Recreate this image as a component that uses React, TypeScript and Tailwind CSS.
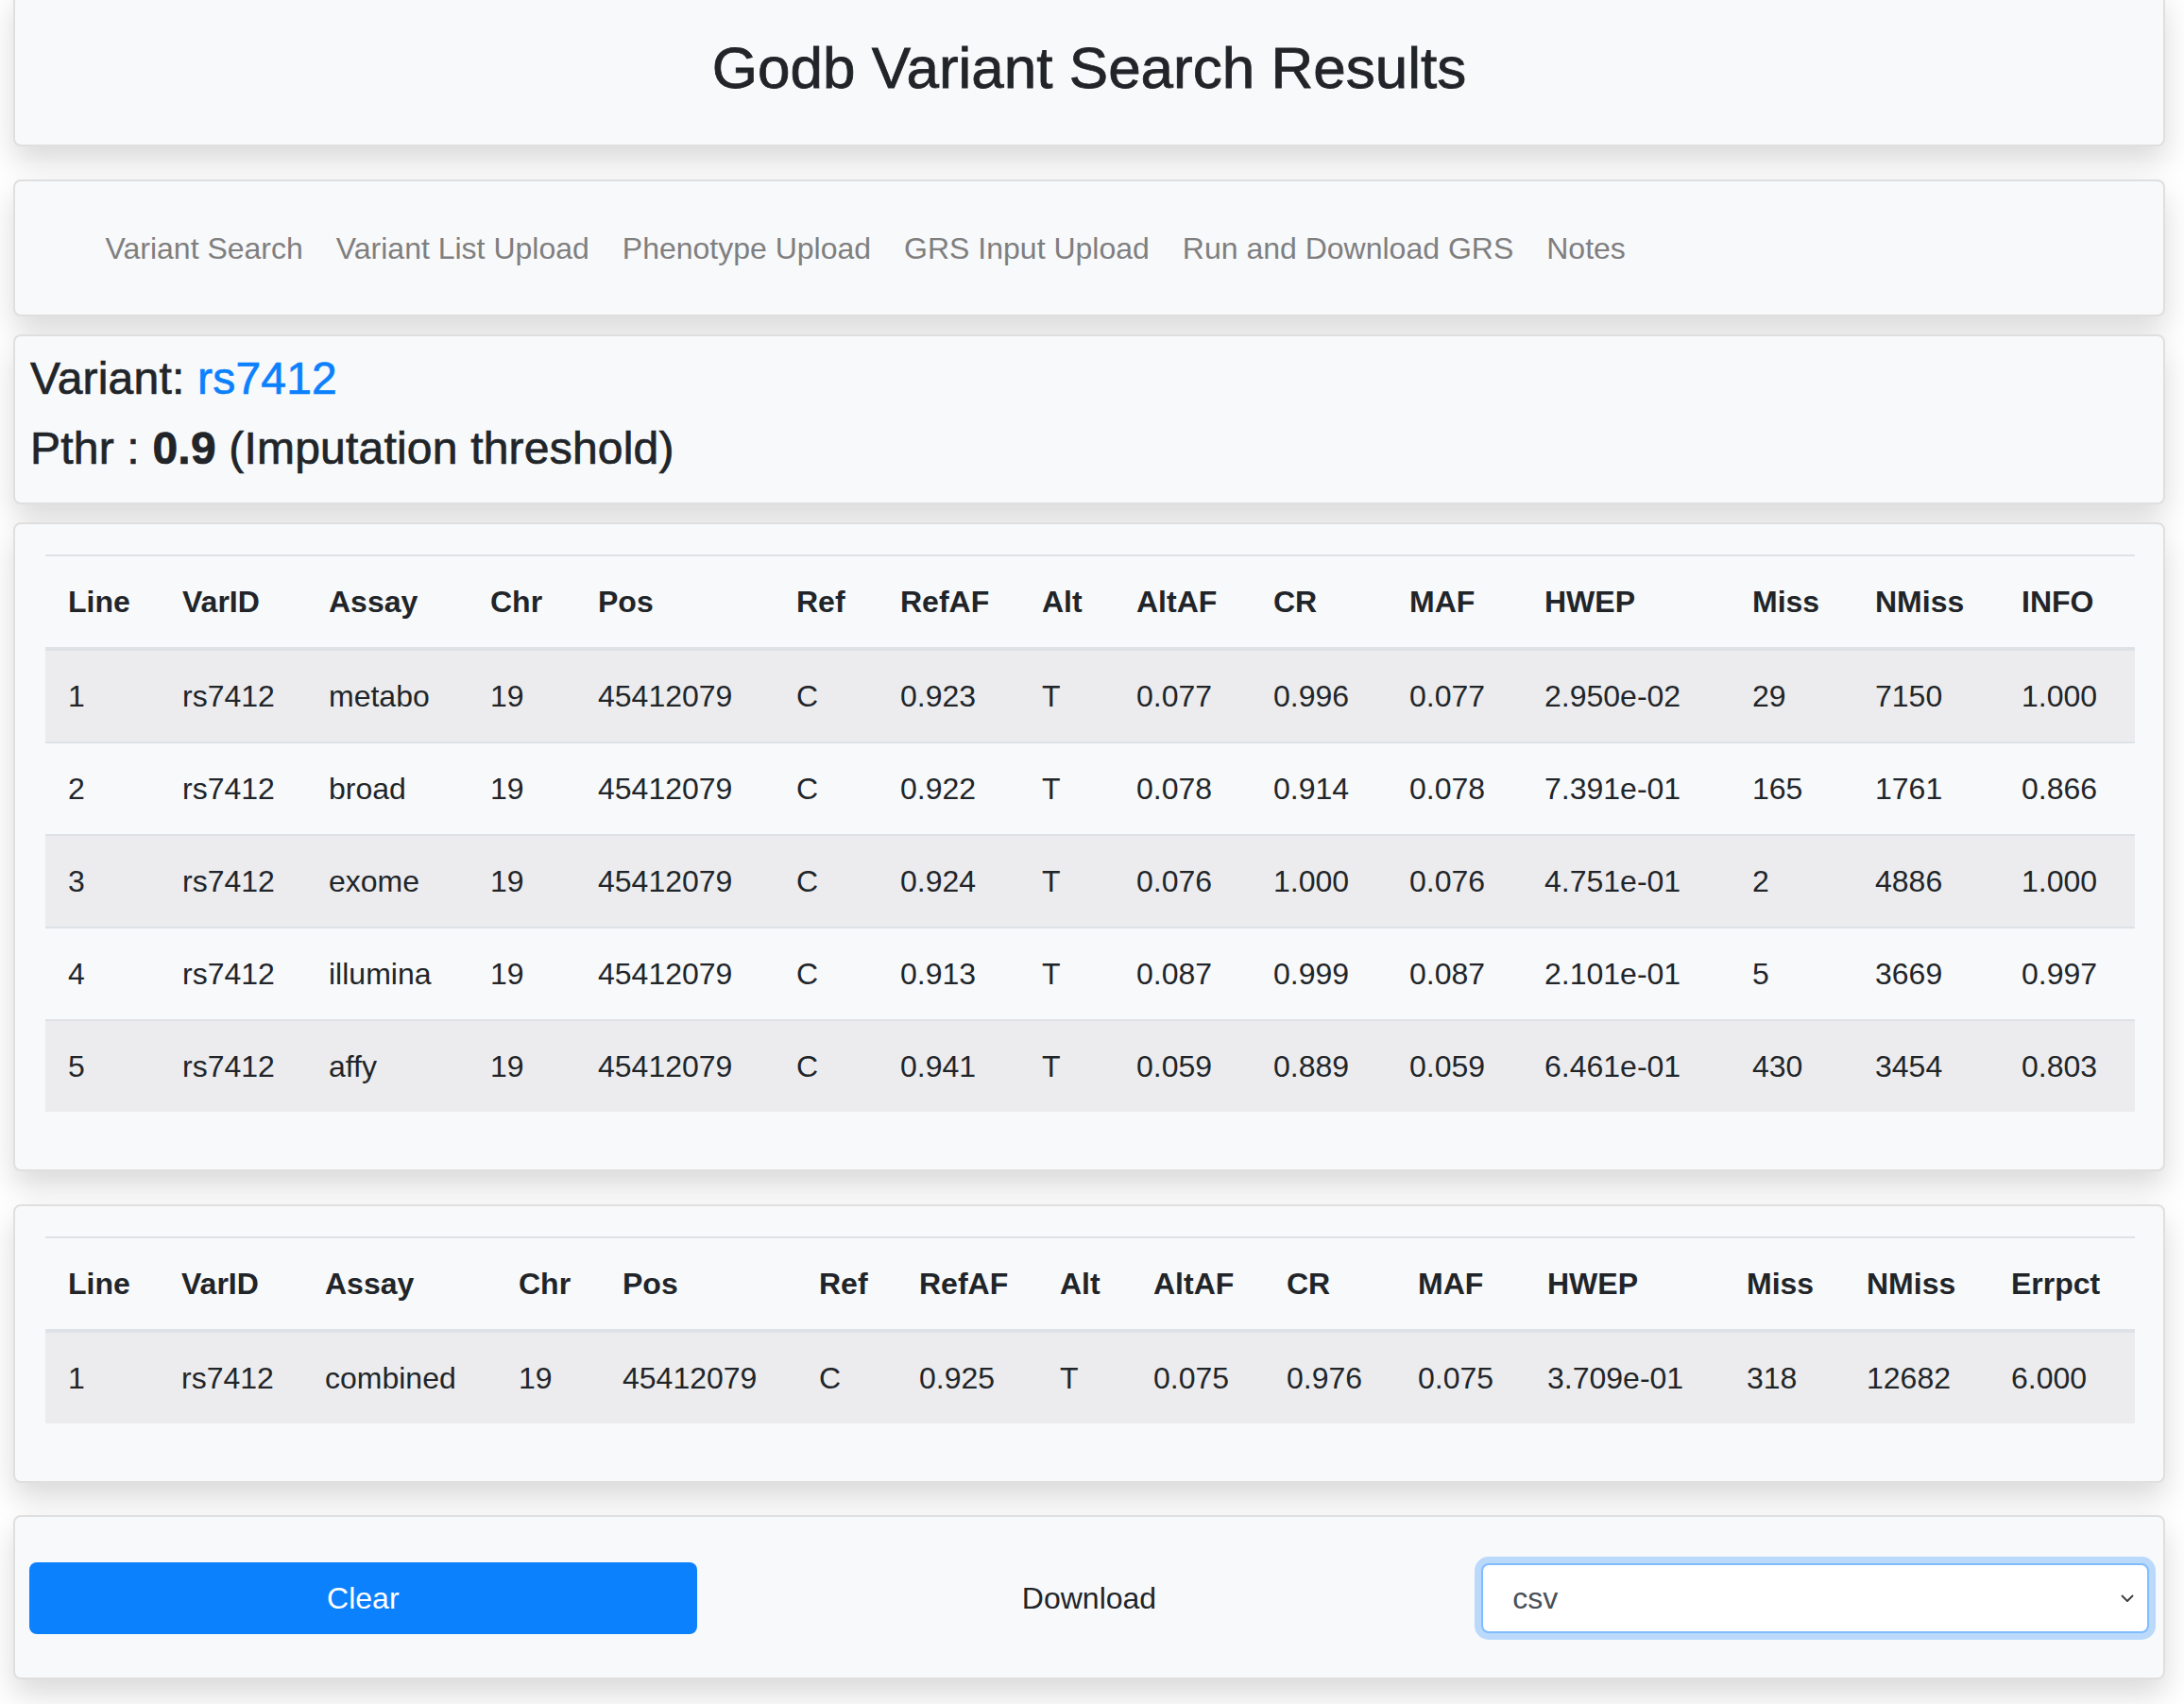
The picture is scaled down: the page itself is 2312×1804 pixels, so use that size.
import React from "react"

const headers1 = ["Line", "VarID", "Assay", "Chr", "Pos", "Ref", "RefAF", "Alt", "AltAF", "CR", "MAF", "HWEP", "Miss", "NMiss", "INFO"]
const headers2 = ["Line", "VarID", "Assay", "Chr", "Pos", "Ref", "RefAF", "Alt", "AltAF", "CR", "MAF", "HWEP", "Miss", "NMiss", "Errpct"]

const cols1 = ["w-[121px]", "w-[155px]", "w-[171px]", "w-[114px]", "w-[210px]", "w-[110px]", "w-[150px]", "w-[100px]", "w-[145px]", "w-[144px]", "w-[143px]", "w-[220px]", "w-[130px]", "w-[155px]", "w-[144px]"]
const cols2 = ["w-[120px]", "w-[152px]", "w-[205px]", "w-[110px]", "w-[208px]", "w-[106px]", "w-[149px]", "w-[99px]", "w-[141px]", "w-[139px]", "w-[137px]", "w-[211px]", "w-[127px]", "w-[153px]", "w-[155px]"]

const rows1 = [
  ["1", "rs7412", "metabo", "19", "45412079", "C", "0.923", "T", "0.077", "0.996", "0.077", "2.950e-02", "29", "7150", "1.000"],
  ["2", "rs7412", "broad", "19", "45412079", "C", "0.922", "T", "0.078", "0.914", "0.078", "7.391e-01", "165", "1761", "0.866"],
  ["3", "rs7412", "exome", "19", "45412079", "C", "0.924", "T", "0.076", "1.000", "0.076", "4.751e-01", "2", "4886", "1.000"],
  ["4", "rs7412", "illumina", "19", "45412079", "C", "0.913", "T", "0.087", "0.999", "0.087", "2.101e-01", "5", "3669", "0.997"],
  ["5", "rs7412", "affy", "19", "45412079", "C", "0.941", "T", "0.059", "0.889", "0.059", "6.461e-01", "430", "3454", "0.803"],
]

const rows2 = [
  ["1", "rs7412", "combined", "19", "45412079", "C", "0.925", "T", "0.075", "0.976", "0.075", "3.709e-01", "318", "12682", "6.000"],
]

const navItems = ["Variant Search", "Variant List Upload", "Phenotype Upload", "GRS Input Upload", "Run and Download GRS", "Notes"]

const card = "rounded-[8px] border-2 border-[#dfdfdf] bg-[#f8f9fa] shadow-[0_16px_32px_rgba(0,0,0,0.15)]"

function ResultTable({ headers, cols, rows }: { headers: string[]; cols: string[]; rows: string[][] }) {
  return (
    <table className="w-full table-fixed border-collapse text-[32px] leading-[48px]">
      <colgroup>
        {cols.map((c, i) => (
          <col key={i} className={c} />
        ))}
      </colgroup>
      <thead>
        <tr>
          {headers.map((h) => (
            <th key={h} className="border-t-2 border-b-4 border-[#dee2e6] px-6 py-6 text-left font-bold">
              {h}
            </th>
          ))}
        </tr>
      </thead>
      <tbody>
        {rows.map((r, i) => (
          <tr key={i} className={i % 2 === 0 ? "bg-[#ececee]" : ""}>
            {r.map((v, j) => (
              <td key={j} className="border-t-2 border-[#dee2e6] px-6 py-6 whitespace-nowrap">
                {v}
              </td>
            ))}
          </tr>
        ))}
      </tbody>
    </table>
  )
}

export default function App() {
  return (
    <div className="min-h-screen overflow-hidden bg-white pl-[14px] pr-[20px] font-['Liberation_Sans',Arial,sans-serif] text-[#212529]">
      {/* title */}
      <div className={`${card} -mt-[12px] flex h-[167px] items-center justify-center`}>
        <h2 className="text-[62px] leading-[74px] font-medium [-webkit-text-stroke:0.8px_currentColor]">Godb Variant Search Results</h2>
      </div>

      {/* nav */}
      <div className={`${card} mt-[35px] flex h-[145px] items-center pl-[78px]`}>
        {navItems.map((n) => (
          <a key={n} className="px-[17.5px] text-[32px] leading-[48px] text-[#7f7f80]">
            {n}
          </a>
        ))}
      </div>

      {/* variant info */}
      <div className={`${card} mt-[19px] px-4 pt-4 pb-4`}>
        <h4 className="mb-4 text-[48px] leading-[58px] font-medium tracking-[0.2px] [-webkit-text-stroke:0.7px_currentColor]">
          Variant: <span className="text-[#0c81fd]">rs7412</span>
        </h4>
        <h4 className="mb-3 text-[48px] leading-[58px] font-medium tracking-[0.2px] [-webkit-text-stroke:0.7px_currentColor]">
          Pthr : <b className="font-bold">0.9</b> (Imputation threshold)
        </h4>
      </div>

      {/* assay table */}
      <div className={`${card} mt-[19px] px-8 pt-8 pb-[61px]`}>
        <ResultTable headers={headers1} cols={cols1} rows={rows1} />
      </div>

      {/* combined table */}
      <div className={`${card} mt-[35px] px-8 pt-8 pb-[61px]`}>
        <ResultTable headers={headers2} cols={cols2} rows={rows2} />
      </div>

      {/* actions */}
      <div className={`${card} mt-[34px] mb-10 px-[15px] pt-[48px] pb-[46px]`}>
        <div className="grid grid-cols-3 items-center gap-x-[62px]">
          <button className="h-[76px] rounded-[8px] bg-[#0c81fd] text-[32px] text-white">Clear</button>
          <div className="text-center text-[32px] leading-[48px]">Download</div>
          <div className="flex h-[74px] items-center justify-between rounded-[8px] border-2 border-[#80bdff] bg-white pr-[14px] pl-[31px] shadow-[0_0_0_7px_rgba(0,123,255,0.25)]">
            <span className="text-[32px] text-[#495057]">csv</span>
            <svg width="14" height="9" viewBox="0 0 14 9" fill="none">
              <path d="M1.5 1.5 L7 7 L12.5 1.5" stroke="#3a3a3a" strokeWidth="1.8" strokeLinecap="round" strokeLinejoin="round" />
            </svg>
          </div>
        </div>
      </div>
    </div>
  )
}
